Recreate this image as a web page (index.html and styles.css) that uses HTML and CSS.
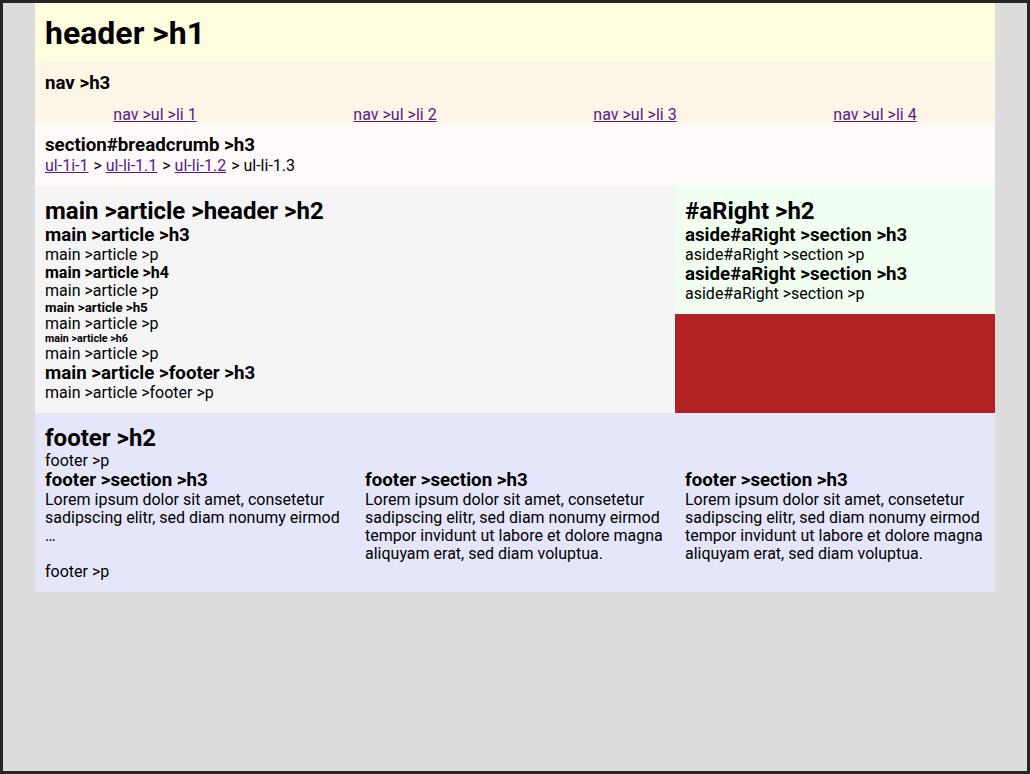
FILE: index.html
```html
<!DOCTYPE html>
<html lang="en">
<head>
<meta charset="utf-8">
<title>Layout</title>
<link rel="stylesheet" href="styles.css">
</head>
<body>
<div class="page">
  <header class="site-header"><h1>header &gt;h1</h1></header>
  <nav class="site-nav">
    <h3>nav &gt;h3</h3>
    <ul class="nav-list">
      <li><a href="#">nav &gt;ul &gt;li 1</a></li>
      <li><a href="#">nav &gt;ul &gt;li 2</a></li>
      <li><a href="#">nav &gt;ul &gt;li 3</a></li>
      <li><a href="#">nav &gt;ul &gt;li 4</a></li>
    </ul>
  </nav>
  <section class="breadcrumb">
    <h3>section#breadcrumb &gt;h3</h3>
    <ul class="crumbs">
      <li><a href="#">ul-1i-1</a></li>
      <li><a href="#">ul-li-1.1</a></li>
      <li><a href="#">ul-li-1.2</a></li>
      <li>ul-li-1.3</li>
    </ul>
  </section>
  <div class="content">
    <main class="main">
      <article>
        <header><h2>main &gt;article &gt;header &gt;h2</h2></header>
        <h3>main &gt;article &gt;h3</h3>
        <p>main &gt;article &gt;p</p>
        <h4>main &gt;article &gt;h4</h4>
        <p>main &gt;article &gt;p</p>
        <h5>main &gt;article &gt;h5</h5>
        <p>main &gt;article &gt;p</p>
        <h6>main &gt;article &gt;h6</h6>
        <p>main &gt;article &gt;p</p>
        <footer>
          <h3>main &gt;article &gt;footer &gt;h3</h3>
          <p>main &gt;article &gt;footer &gt;p</p>
        </footer>
      </article>
    </main>
    <aside class="aside">
      <h2>#aRight &gt;h2</h2>
      <section>
        <h3>aside#aRight &gt;section &gt;h3</h3>
        <p>aside#aRight &gt;section &gt;p</p>
      </section>
      <section>
        <h3>aside#aRight &gt;section &gt;h3</h3>
        <p>aside#aRight &gt;section &gt;p</p>
      </section>
    </aside>
  </div>
  <footer class="site-footer">
    <h2>footer &gt;h2</h2>
    <p>footer &gt;p</p>
    <div class="columns">
      <section>
        <h3>footer &gt;section &gt;h3</h3>
        <p>Lorem ipsum dolor sit amet, consetetur sadipscing elitr, sed diam nonumy eirmod …</p>
      </section>
      <section>
        <h3>footer &gt;section &gt;h3</h3>
        <p>Lorem ipsum dolor sit amet, consetetur sadipscing elitr, sed diam nonumy eirmod tempor invidunt ut labore et dolore magna aliquyam erat, sed diam voluptua.</p>
      </section>
      <section>
        <h3>footer &gt;section &gt;h3</h3>
        <p>Lorem ipsum dolor sit amet, consetetur sadipscing elitr, sed diam nonumy eirmod tempor invidunt ut labore et dolore magna aliquyam erat, sed diam voluptua.</p>
      </section>
    </div>
    <p>footer &gt;p</p>
  </footer>
</div>
</body>
</html>
```
FILE: styles.css
```css
* {
  box-sizing: border-box;
  margin: 0;
  padding: 0;
}

body {
  min-height: 100vh;
  border: 3px solid #262626;
  background: gainsboro;
  color: #000;
  font-family: Roboto, sans-serif;
  font-size: 16px;
  line-height: 18px;
}

/* Headings keep the browser's default size scale. */
h1 { line-height: 38px; }
h2 { line-height: 28px; }
h3 { line-height: 21px; }
h4 { line-height: 18px; }
h5 { line-height: 15px; }
h6 { line-height: 12px; }

a { color: #551a8b; }

ul {
  line-height: 19px;
  list-style: none;
}

.page {
  max-width: 960px;
  margin: 0 auto;
}

.site-header {
  padding: 11px 10px 10px;
  background: lightyellow;
}

.site-nav { background: oldlace; }
.site-nav h3 { padding: 11px 10px; }

.nav-list {
  display: grid;
  grid-template-columns: repeat(4, 1fr);
  text-align: center;
}

.breadcrumb {
  padding: 11px 10px;
  background: snow;
}

.crumbs {
  display: flex;
  gap: 1px;
}
.crumbs li + li::before { content: "\00a0>\00a0"; }

.content {
  display: grid;
  grid-template-columns: 2fr 1fr;
  align-items: start;
  background: firebrick;
}

.main {
  padding: 11px 10px;
  background: whitesmoke;
}

.aside {
  padding: 11px 10px;
  background: honeydew;
}

.site-footer {
  padding: 11px 10px;
  background: lavender;
}

.columns {
  display: grid;
  grid-template-columns: repeat(3, 1fr);
  gap: 20px;
}
```
